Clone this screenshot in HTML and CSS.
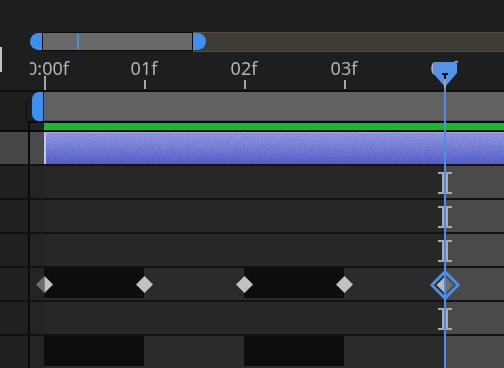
FILE: index.html
```html
<!DOCTYPE html>
<html>
<head>
<meta charset="utf-8">
<link rel="stylesheet" href="styles.css">
</head>
<body>
<div class="app">
  <div class="topbar"></div>
  <div class="header">
    <div class="header-left"><div class="side-tab"></div></div>
    <div class="header-main">
      <div class="scroller">
        <div class="handle handle-l"></div>
        <div class="thumb"><div class="thumb-mark"></div></div>
        <div class="track"><div class="handle handle-r"></div></div>
      </div>
      <div class="ruler">
        <div class="ruler-cells">
          <div class="cell first"><span class="lbl">0:00f</span><span class="tick"></span></div>
          <div class="cell"><span class="lbl">01f</span><span class="tick"></span></div>
          <div class="cell"><span class="lbl">02f</span><span class="tick"></span></div>
          <div class="cell"><span class="lbl">03f</span><span class="tick"></span></div>
          <div class="cell"><span class="lbl">04f</span><span class="tick"></span></div>
        </div>
      </div>
    </div>
  </div>
  <div class="hline"></div>

  <div class="layer-row">
    <div class="lr-side"></div>
    <div class="lr-vline"></div>
    <div class="lr-main">
      <div class="lr-handle"></div>
      <div class="lr-bar"></div>
    </div>
  </div>

  <div class="green-row">
    <div class="col-a"></div><div class="col-div"></div><div class="col-b"></div>
    <div class="green"></div>
  </div>

  <div class="clip-row">
    <div class="col-a"></div><div class="col-div"></div><div class="col-b"></div>
    <div class="clip">
      <svg class="noise" width="100%" height="100%">
        <filter id="grain"><feTurbulence type="fractalNoise" baseFrequency="0.75" numOctaves="2" stitchTiles="stitch"/><feColorMatrix type="saturate" values="0"/></filter>
        <rect width="100%" height="100%" filter="url(#grain)"/>
      </svg>
    </div>
  </div>

  <div class="prop">
    <div class="col-a"></div><div class="col-div"></div><div class="col-b"></div>
    <div class="tl"><div class="past"></div><div class="future">
      <svg class="ibeam" viewBox="0 0 14 22"><rect x="0" y="0" width="14" height="2"/><rect x="0" y="20" width="14" height="2"/><rect x="4" y="2" width="6" height="18"/></svg>
    </div></div>
  </div>
  <div class="prop">
    <div class="col-a"></div><div class="col-div"></div><div class="col-b"></div>
    <div class="tl"><div class="past"></div><div class="future">
      <svg class="ibeam" viewBox="0 0 14 22"><rect x="0" y="0" width="14" height="2"/><rect x="0" y="20" width="14" height="2"/><rect x="4" y="2" width="6" height="18"/></svg>
    </div></div>
  </div>
  <div class="prop">
    <div class="col-a"></div><div class="col-div"></div><div class="col-b"></div>
    <div class="tl"><div class="past"></div><div class="future">
      <svg class="ibeam" viewBox="0 0 14 22"><rect x="0" y="0" width="14" height="2"/><rect x="0" y="20" width="14" height="2"/><rect x="4" y="2" width="6" height="18"/></svg>
    </div></div>
  </div>
  <div class="prop">
    <div class="col-a"></div><div class="col-div"></div><div class="col-b"></div>
    <div class="tl">
      <div class="past">
        <div class="seg dark">
          <svg class="kf" viewBox="0 0 17 17"><polygon points="8.5,0 8.5,17 0,8.5" fill="#6e6e6e"/><polygon points="8.5,0 17,8.5 8.5,17" fill="#c2c2c2"/></svg>
        </div>
        <div class="seg light">
          <svg class="kf" viewBox="0 0 17 17"><polygon points="8.5,0 17,8.5 8.5,17 0,8.5" fill="#c2c2c2"/></svg>
        </div>
        <div class="seg dark">
          <svg class="kf" viewBox="0 0 17 17"><polygon points="8.5,0 17,8.5 8.5,17 0,8.5" fill="#c2c2c2"/></svg>
        </div>
        <div class="seg light">
          <svg class="kf" viewBox="0 0 17 17"><polygon points="8.5,0 17,8.5 8.5,17 0,8.5" fill="#c2c2c2"/></svg>
        </div>
      </div>
      <div class="future">
        <svg class="kf-sel" viewBox="0 0 30 30">
          <polygon points="15,6.5 15,23.5 6.5,15" fill="#b9b9b9"/>
          <polygon points="15,6.5 23.5,15 15,23.5" fill="#6e6e6e"/>
          <polygon points="15,1.8 28.2,15 15,28.2 1.8,15" fill="none" stroke="#4b8fe9" stroke-width="3" stroke-linejoin="round"/>
        </svg>
      </div>
    </div>
  </div>
  <div class="prop">
    <div class="col-a"></div><div class="col-div"></div><div class="col-b"></div>
    <div class="tl"><div class="past"></div><div class="future">
      <svg class="ibeam" viewBox="0 0 14 22"><rect x="0" y="0" width="14" height="2"/><rect x="0" y="20" width="14" height="2"/><rect x="4" y="2" width="6" height="18"/></svg>
    </div></div>
  </div>
  <div class="prop">
    <div class="col-a"></div><div class="col-div"></div><div class="col-b"></div>
    <div class="tl">
      <div class="past">
        <div class="seg dark"></div>
        <div class="seg light"></div>
        <div class="seg dark"></div>
        <div class="seg light"></div>
      </div>
      <div class="future"></div>
    </div>
  </div>

  <div class="ph-line"></div>
  <svg class="ph-head" viewBox="0 0 26 27">
    <path d="M3,1 H23 Q25,1 25,3 V12 L13,26 L1,12 V3 Q1,1 3,1 Z" fill="#5592e8"/>
    <rect x="10" y="12" width="6" height="2" fill="#141414"/>
    <rect x="12" y="14" width="2" height="4" fill="#141414"/>
    <rect x="12" y="18" width="2" height="9" fill="#a3a3a3"/>
  </svg>
</div>
</body>
</html>
```

FILE: styles.css
```css
* { box-sizing: border-box; margin: 0; padding: 0; }
html, body { width: 504px; height: 368px; overflow: hidden; background: #1e1e1e; }
body { margin: 0; font-family: "Noto Sans", "Open Sans", sans-serif; }

.app { position: relative; width: 504px; height: 368px; display: flex; flex-direction: column; }
.topbar { height: 32px; flex: none; }

.header { display: flex; height: 58px; flex: none; }
.header-left { width: 30px; flex: none; }
.side-tab { width: 2px; height: 25px; margin-top: 15px; background: #c4c4c4; }
.header-main { flex: 1; display: flex; flex-direction: column; min-width: 0; }

.scroller { height: 20px; display: flex; align-items: flex-start; flex: none; }
.handle { background: #3f8ff0; height: 17px; flex: none; }
.handle-l { width: 12px; margin-top: 1px; border-radius: 9px 0 0 9px; }
.thumb { width: 151px; height: 19px; border: 1px solid #0b0b0b; background: #696969; flex: none; }
.thumb-mark { width: 2px; height: 15px; margin: 1px 0 0 34px; background: #4a8ee6; }
.track { flex: 1; height: 20px; border-top: 1px solid #574d3c; border-bottom: 1px solid #574d3c; background: #3f3b35; }
.handle-r { width: 13px; border-radius: 0 9px 9px 0; }

.ruler { height: 38px; overflow: hidden; flex: none; }
.ruler-cells { display: flex; margin-left: -36px; }
.cell { width: 100px; flex: none; display: flex; flex-direction: column; align-items: center; }
.lbl { display: block; font-size: 18px; line-height: 18px; padding-top: 7px; color: #b3b3b3; white-space: nowrap; }
.tick { display: block; width: 2px; height: 9px; margin-top: 3px; margin-left: 2px; background: #a8a8a8; }
.cell.first .lbl { margin-left: 8px; }
.cell.first .tick { height: 14px; margin-top: -1px; }

.hline { height: 2px; background: #0e0e0e; flex: none; }

.layer-row { height: 31px; display: flex; flex: none; }
.lr-side { width: 26px; flex: none; }
.lr-vline { width: 1px; height: 19px; margin-top: 10px; background: #0a0a0a; flex: none; }
.lr-main { flex: 1; display: flex; gap: 1px; padding-left: 5px; border-bottom: 2px solid #0c0c0c; }
.lr-handle { width: 11px; background: #3f8ff0; border-radius: 7px 0 0 7px; flex: none; }
.lr-bar { flex: 1; background: #626262; border-bottom: 1px solid #4f4f4f; }

.col-a { width: 28px; flex: none; background: #212121; }
.col-div { width: 2px; flex: none; background: #0a0a0a; }
.col-b { width: 14px; flex: none; background: #242424; }

.green-row { height: 9px; display: flex; flex: none; border-bottom: 2px solid #0a0a0a; }
.green-row .col-a { background: #1e1e1e; }
.green-row .col-b { background: #222222; }
.green { flex: 1; background: #13bd2b; }

.clip-row { height: 32px; display: flex; flex: none; }
.clip-row .col-a { background: #474747; }
.clip-row .col-b { background: #4a4a4a; }
.clip { flex: 1; position: relative; overflow: hidden;
  background: linear-gradient(#7e87da, #6a74d0 45%, #4b55c2);
  border-left: 2px solid #c2c6ee; border-top: 1px solid #a3a9e4; }
.noise { display: block; opacity: 0.4; mix-blend-mode: overlay; }

.prop { height: 34px; display: flex; flex: none; border-top: 2px solid #121212; }
.tl { flex: 1; display: flex; }
.past { width: 400px; flex: none; display: flex; background: #272727; }
.future { flex: 1; position: relative; background: #4a4a4a; }
.seg { width: 100px; flex: none; position: relative; }
.seg.dark { background: #0d0d0d; border-bottom: 2px solid #2b2b2b; }
.seg.light { background: #2b2b2b; }
.kf { position: absolute; left: -8px; top: 8px; width: 17px; height: 17px; }
.kf-sel { position: absolute; left: -14px; top: 2px; width: 30px; height: 30px; z-index: 2; }
.ibeam { position: absolute; left: -6px; top: 6px; width: 14px; height: 22px; fill: #a9a9a9; }

.ph-line { position: absolute; left: 444px; top: 86px; bottom: 0; width: 2px; background: #4c8de6; z-index: 4; }
.ph-head { position: absolute; left: 432px; top: 61px; width: 26px; height: 27px; z-index: 5; }
```
